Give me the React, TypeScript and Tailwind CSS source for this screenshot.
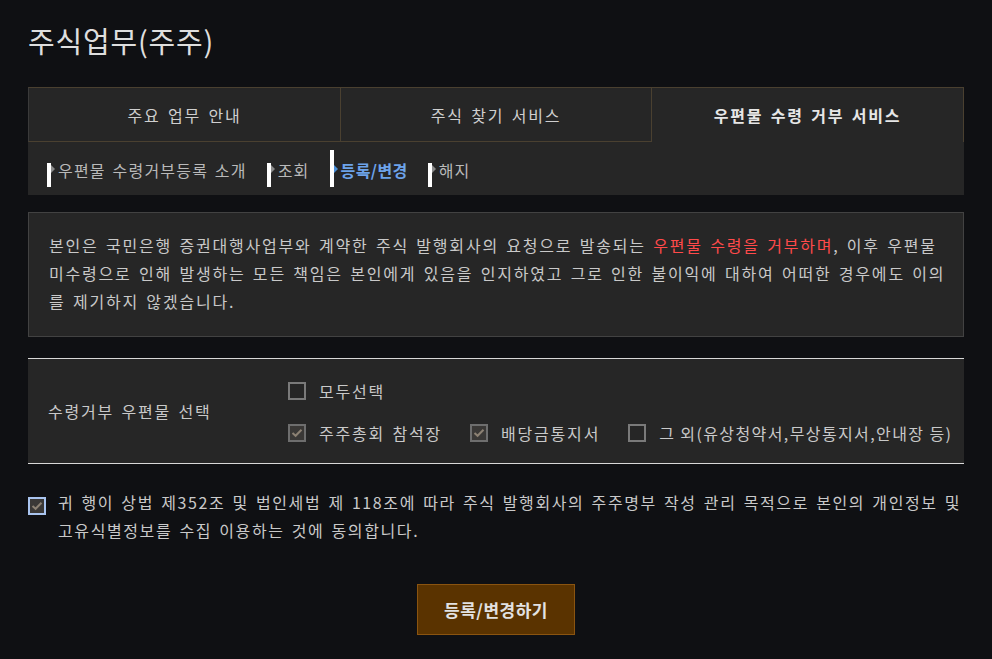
import { useState } from 'react';

const tabs = ['주요 업무 안내', '주식 찾기 서비스', '우편물 수령 거부 서비스'];
const subTabs = ['우편물 수령거부등록 소개', '조회', '등록/변경', '해지'];

const CheckBox = ({ checked, focus }: { checked: boolean; focus?: boolean }) => (
  <span
    className={`inline-flex h-[18px] w-[18px] shrink-0 items-center justify-center border-2 ${
      focus ? 'border-[#a9c4ef] bg-[#3a3836]' : checked ? 'border-[#6e6e6e] bg-[#3a3836]' : 'border-[#7a7a7a] bg-[#262626]'
    }`}
  >
    {checked && (
      <svg width="12" height="10" viewBox="0 0 12 10">
        <path d="M1.5 5 L4.6 7.8 L10.5 1.8" fill="none" stroke="#8c8173" strokeWidth="2" />
      </svg>
    )}
  </span>
);

export default function App() {
  const [items, setItems] = useState({ meeting: true, dividend: true, etc: false });
  const [agree, setAgree] = useState(true);
  const allChecked = items.meeting && items.dividend && items.etc;

  return (
    <div className="min-h-[659px] bg-[#0f1013] px-[28px] pt-[19px] pb-[25px] font-['Noto_Sans_CJK_KR','Liberation_Sans',sans-serif] text-[16px] tracking-[1.8px] [word-spacing:2px] text-[#c9c9c9]">
      <h1 className="text-[29px] leading-[42px] tracking-[0.8px] [word-spacing:0px] text-[#dedede]">주식업무(주주)</h1>

      <div className="mt-[26px] bg-[#262626]">
        <div className="grid grid-cols-3">
          {tabs.map((t, i) => (
            <div
              key={t}
              className={`flex h-[55px] items-center justify-center border-t ${
                i === 2
                  ? 'border-r border-[#4a4030] font-bold text-[#e6e6e6]'
                  : i === 1
                  ? 'border-x border-b border-[#4a4030] text-[#cfcfcf]'
                  : 'border-l border-b border-[#4a4030] border-l-[#3a3a3a] text-[#cfcfcf]'
              }`}
            >
              {t}
            </div>
          ))}
        </div>
        <div className="flex h-[53px] items-end gap-[20px] pb-[8px] pl-[19px] tracking-[1.2px]">
          {subTabs.map((s, i) => {
            const active = i === 2;
            return (
              <div key={s} className="flex items-end">
                <span className={`w-[4px] bg-white ${active ? 'h-[37px]' : 'h-[24px]'}`} />
                <span
                  className={`mb-[14px] mr-[3px] h-0 w-0 border-y-[4px] border-l-[4px] border-y-transparent ${
                    active ? 'border-l-[#4a8fd8]' : 'border-l-[#8a8a8a]'
                  }`}
                />
                <span className={`mb-[3px] leading-[28px] ${active ? 'font-bold tracking-[0.4px] text-[#6da3ea]' : 'text-[#b9b9b9]'}`}>{s}</span>
              </div>
            );
          })}
        </div>
      </div>

      <div className="mt-[17px] border border-[#424242] bg-[#262626] pl-[20px] pr-[14px] pt-[18px] pb-[21px] leading-[28px]">
        본인은 국민은행 증권대행사업부와 계약한 주식 발행회사의 요청으로 발송되는{' '}
        <span className="text-[#ff4a4a]">우편물 수령을 거부하며</span>, 이후 우편물 미수령으로 인해 발생하는 모든
        책임은 본인에게 있음을 인지하였고 그로 인한 불이익에 대하여 어떠한 경우에도 이의를 제기하지 않겠습니다.
      </div>

      <div className="mt-[21px] flex h-[106px] items-center border-y border-[#d8d8d8] bg-[#262626]">
        <div className="w-[260px] pl-[20px]">수령거부 우편물 선택</div>
        <div className="flex flex-col gap-[16px] pt-[2px]">
          <label
            className="flex items-center gap-[13px]"
            onClick={() => setItems({ meeting: !allChecked, dividend: !allChecked, etc: !allChecked })}
          >
            <CheckBox checked={allChecked} />
            <span className="leading-[26px]">모두선택</span>
          </label>
          <div className="flex items-center">
            <label className="flex items-center gap-[13px]" onClick={() => setItems({ ...items, meeting: !items.meeting })}>
              <CheckBox checked={items.meeting} />
              <span className="leading-[26px]">주주총회 참석장</span>
            </label>
            <label className="ml-[28px] flex items-center gap-[13px]" onClick={() => setItems({ ...items, dividend: !items.dividend })}>
              <CheckBox checked={items.dividend} />
              <span className="leading-[26px]">배당금통지서</span>
            </label>
            <label className="ml-[28px] flex items-center gap-[13px]" onClick={() => setItems({ ...items, etc: !items.etc })}>
              <CheckBox checked={items.etc} />
              <span className="leading-[26px] tracking-[1.4px] [word-spacing:0px]">그 외(유상청약서,무상통지서,안내장 등)</span>
            </label>
          </div>
        </div>
      </div>

      <div className="mt-[24px] flex items-start gap-[12px] leading-[28px] tracking-[1.6px]" onClick={() => setAgree(!agree)}>
        <span className="mt-[2px]">
          <CheckBox checked={agree} focus />
        </span>
        <p>
          귀 행이 상법 제352조 및 법인세법 제 118조에 따라 주식 발행회사의 주주명부 작성 관리 목적으로 본인의 개인정보 및
          고유식별정보를 수집 이용하는 것에 동의합니다.
        </p>
      </div>

      <div className="mt-[40px] flex justify-center">
        <button className="h-[51px] w-[158px] border border-[#8a5410] bg-[#5a3300] text-[17px] font-bold tracking-[0.5px] text-[#e2e2e2]">
          등록/변경하기
        </button>
      </div>
    </div>
  );
}
